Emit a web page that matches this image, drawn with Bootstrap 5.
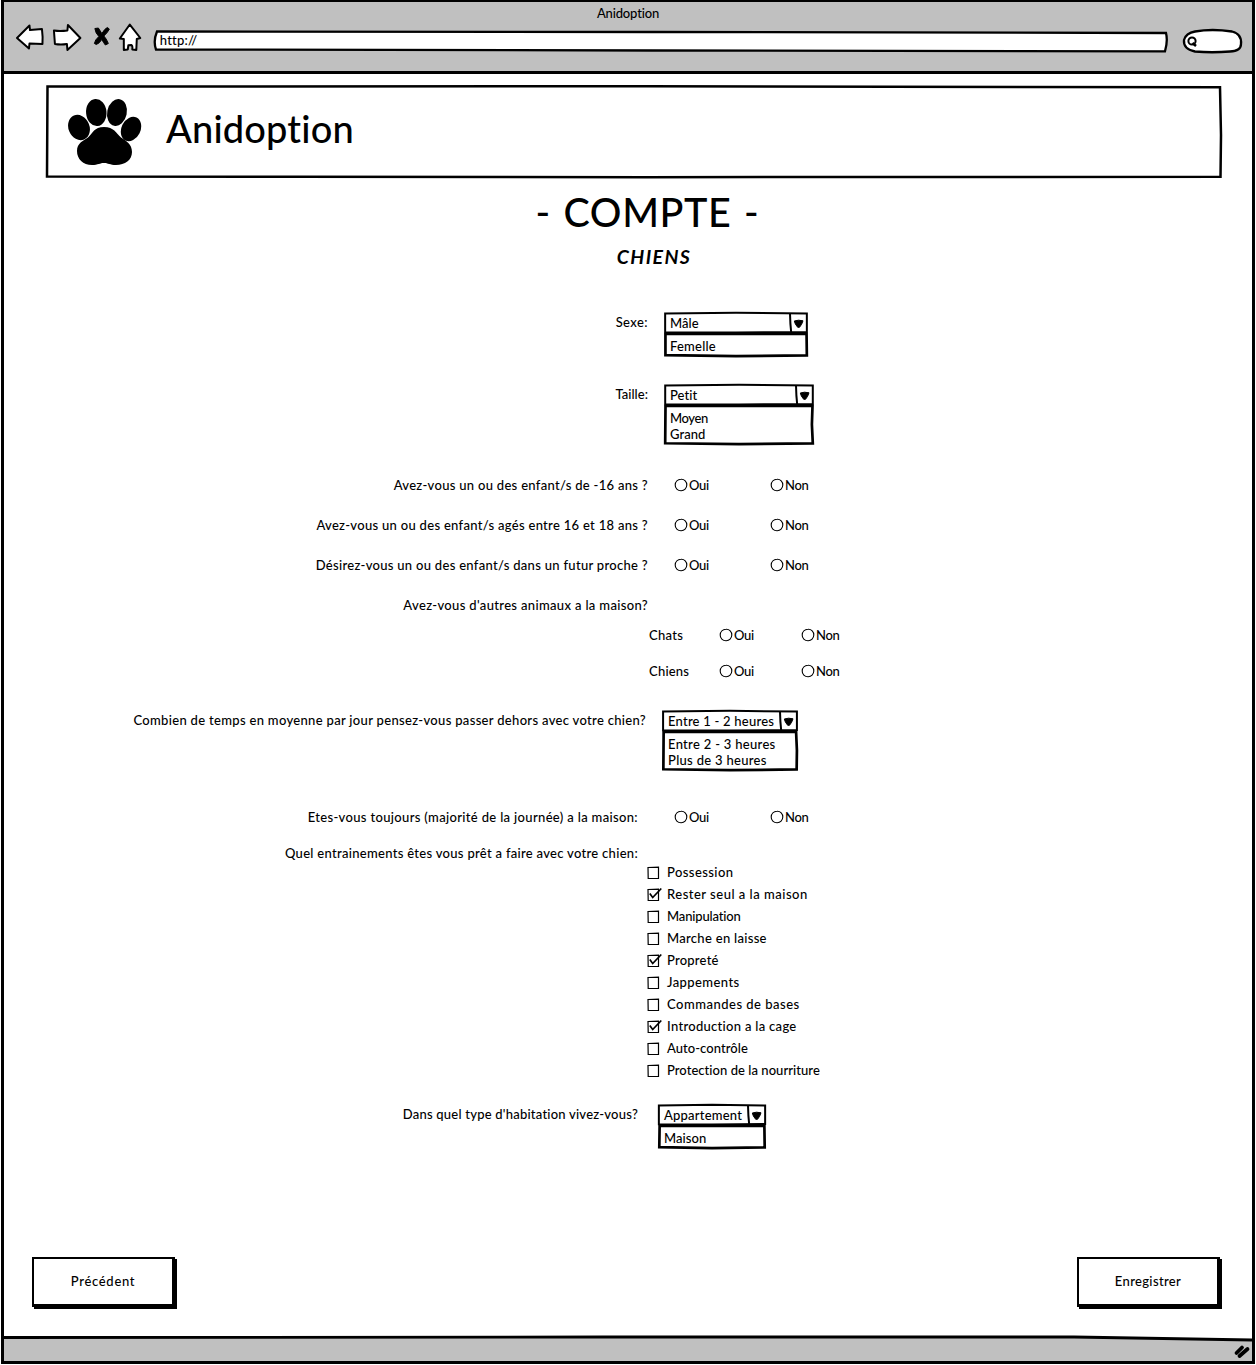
<!DOCTYPE html>
<html lang="fr">
<head>
<meta charset="utf-8">
<meta name="viewport" content="width=device-width, initial-scale=1">
<title>Anidoption</title>
<link href="https://cdn.jsdelivr.net/npm/bootstrap@5.3.0/dist/css/bootstrap.min.css" rel="stylesheet">
<style>
body{font-family:Lato,"Open Sans",sans-serif;font-size:13px;line-height:22px;color:#000;background:#fff;letter-spacing:.3px;font-weight:500}
.win{width:1254px;height:1364px;margin-left:1px;border:3px solid #000;border-top-width:2.5px}
.topbar{height:72px;background:#c0c0c0;border-bottom:3px solid #000;padding:0 9px 0 11px}
.topbar .ttl{height:21px;line-height:22px;letter-spacing:-.15px;margin-right:2px}
.tools{height:32px}
.url{width:1016px;height:22px;margin:3px 0 0 8px}
.back{position:absolute;left:0;top:0;width:100%;height:100%;z-index:0;overflow:visible}
.back path{vector-effect:non-scaling-stroke}
.url span{position:relative;padding-left:7px;line-height:20px;letter-spacing:.2px;display:block}
.pill{width:61px;height:26px;margin:3px 0 0 15px}
.banner{height:93px;margin:11px 30px 0 42px;padding:0 0 0 20px}
.banner h1{font-size:38px;line-height:44px;letter-spacing:.15px;margin:-8px 0 0 24px;font-weight:500;position:relative}
.paw{position:relative}
.page-h{font-size:39.5px;line-height:46px;letter-spacing:.6px;margin:11px 0 0 39px;font-weight:500;word-spacing:2px}
.sub-h{font-size:19.5px;line-height:24px;margin:10px 0 42px 52px;letter-spacing:1.4px;font-weight:700;font-style:italic}
.q{height:22px}
.q.one{height:46px}
.q.two{height:62px}
.g8{margin-top:8px}.g14{margin-top:14px}.g18{margin-top:18px}.g22{margin-top:22px}.g26{margin-top:26px}.g27{margin-top:27px}.g29{margin-top:29px}.g35{margin-top:35px}
.sub{margin-left:645px}
.sub .nm{width:70px}
.train{height:19px}
.lb{width:644px;text-align:right;flex:none;white-space:nowrap}
.lb.m{width:642px;letter-spacing:.32px}
.lb.s{width:634px}
.sel{flex:none;margin:1px 0 0 16px;white-space:nowrap}
.sel.last{margin-left:20px}
.w144{width:144px}.w150{width:150px}.w136{width:136px}.w108{width:108px}
.hd{height:22px;padding-left:6px;position:relative}
.hd span,.op span{position:relative}
.hd .ar{width:19px;height:22px;flex:none;position:relative}
.op{line-height:16px;padding:4px 0 3px 6px;position:relative}
.r{flex:none;white-space:nowrap;letter-spacing:-.3px}
.r.a{width:96px;margin-left:26px}
.r.b{width:96px;margin-left:36px}
.r.c{width:82px}
.r svg{display:block;width:14px;height:14px;margin-right:1px}
.ck{height:22px;margin-left:642px}
.ck svg{display:block;width:16px;height:16px;margin:1px 5px 0 0}
.k-4{letter-spacing:-.4px}.k-1{letter-spacing:-.15px}.k0{letter-spacing:.05px}.k2{letter-spacing:.22px}.k3{letter-spacing:.34px}.k4{letter-spacing:.42px}.k5{letter-spacing:.5px}
.acts{margin:108px 32px 0 28px}
.bt{width:143px;height:50px;border:2px solid #000;border-radius:0;background:#fff;box-shadow:2px 2px 0 #000;border-bottom-width:3px;border-right-width:3px;font-size:13px;letter-spacing:.35px;font-weight:500;color:#000;padding:0}
.bt.k7{letter-spacing:.7px}
.foot{height:26px}
.foot svg{display:block}
</style>
<script src="https://cdn.jsdelivr.net/npm/bootstrap@5.3.0/dist/js/bootstrap.bundle.min.js"></script>
</head>
<body>
<svg width="0" height="0" class="position-absolute">
<symbol id="rad" viewBox="0 0 14 14"><path d="M7 1.200C10.400 1 12.900 3.700 12.800 7S10.300 12.900 7 12.800S1.100 10.300 1.200 7S3.800 1.300 7 1.200Z" fill="#fff" stroke="#000" stroke-width="1.100"/></symbol>
<symbol id="box" viewBox="0 0 16 16"><path d="M2 2.500L12.500 2.200L12.500 13.400L2.200 13.500Z" fill="#fff" stroke="#000" stroke-width="1.200"/></symbol>
<symbol id="chk" viewBox="0 0 16 16"><path d="M2 2.500L12.500 2.200L12.500 13.400L2.200 13.500Z" fill="#fff" stroke="#000" stroke-width="1.200"/><path d="M3.800 6.500L6.700 10.500L15.300 1.500" fill="none" stroke="#000" stroke-width="1.700"/></symbol>
<symbol id="arr" viewBox="0 0 19 22"><path d="M1 1.500Q1.200 12 2.200 20.500" fill="none" stroke="#000" stroke-width="2"/><path d="M5.300 9Q9.500 7.500 14 8.800Q13 12.500 10.500 15.300L8.700 15.300Q5.800 12 5.300 9Z" fill="#000" stroke="#000" stroke-linejoin="round"/></symbol>
</svg>
<div class="win d-flex flex-column">
  <header class="topbar">
    <div class="ttl text-center">Anidoption</div>
    <div class="tools d-flex align-items-center">
      <svg width="130" height="32" viewBox="15 22.500 130 32" fill="#fff" stroke="#000" stroke-width="2" stroke-linejoin="round">
        <path d="M17 37.500L29.500 25L30 29.500L42 28.500Q43 36 42.500 43.500L29.500 43L29 48Z"/>
        <path d="M54 30Q60 31 67.500 30L68 24.500L80.500 37.500L67.500 49.500L67 43.500Q61 44.500 55 43.500Q54.500 37 54 30Z"/>
        <path d="M95 28L98.500 27.500L102 33Q105 28 107.500 27L109.500 28.500Q108 32 104 35.500Q106.500 38 108.500 43L105.500 44.500Q103.500 42 102 39Q99.500 43 96.500 44L94.500 43Q95 39.500 99 36Q95.500 32.500 95 28Z" fill="#000" stroke-width="1"/>
        <path d="M130 24L140.500 37.500L137 38.500L136.500 49.500L132.500 49Q133 45 131.500 44.500L128.500 44.800L128 49L124 49.500L124 38.500L120 38Z"/>
      </svg>
      <div class="url position-relative"><svg class="back"><path d="M4 1.500L500 2L1013 3Q1015 11 1012 21.300L500 20.500L3 19.500Q0 11 4 1.500Z" fill="#fff" stroke="#000" stroke-width="2.300"/></svg><span>http://</span></div>
      <div class="pill position-relative"><svg class="back"><path d="M13 3.500Q30 .500 50 3.500Q60 6 59 16Q59 23 48 23.500Q30 25 13 23.500Q1 21 2 12Q4 5 13 3.500Z" fill="#fff" stroke="#000" stroke-width="2.300"/><circle cx="10" cy="13" r="3.600" fill="none" stroke="#000" stroke-width="2"/><path d="M10.500 15L14 18" stroke="#000" stroke-width="2.500"/></svg></div>
    </div>
  </header>
  <main>
    <div class="banner d-flex align-items-center position-relative">
      <svg class="back" viewBox="0 0 1176 93" preserveAspectRatio="none"><path d="M1.500 1.500L600 1.200L1174 2.300L1175 50L1174.500 91.800L600 92.200L250 91.800L1 91.500Z" fill="#fff" stroke="#000" stroke-width="2.500"/></svg>
      <svg class="paw" width="76" height="70" viewBox="66 97 76 70"><ellipse cx="79" cy="127.500" rx="10.500" ry="13" transform="rotate(-23 79 127.500)"/><ellipse cx="96.300" cy="112.500" rx="10.200" ry="13.500" transform="rotate(-5 96.300 112.500)"/><ellipse cx="117" cy="112.500" rx="9.800" ry="13.500" transform="rotate(12 117 112.500)"/><ellipse cx="131" cy="129" rx="9.500" ry="12.700" transform="rotate(26 131 129)"/><path d="M104 127C114 127 116 133 121 137.500C126 141 132 144 132 152C132 160 125 165 116 165C110 165 108 163 104 163C100 163 98 165 92 165C83 165 77 159 77 151C77 143 83 141 88 137.500C93 133 94 127 104 127Z"/></svg>
      <h1>Anidoption</h1>
    </div>
    <h2 class="page-h text-center">- COMPTE -</h2>
    <h3 class="sub-h text-center">CHIENS</h3>

    <div class="q one d-flex"><div class="lb k4">Sexe:</div><div class="sel w144"><div class="hd d-flex justify-content-between"><svg class="back" viewBox="0 0 100 22" preserveAspectRatio="none"><path d="M.800 1.500L50 .800L99.200 1.500L99.200 20L50 20.500L.800 20.300Z" fill="#fff" stroke="#000" stroke-width="2"/></svg><span class="k0">Mâle</span><svg class="ar"><use href="#arr"/></svg></div><div class="op"><svg class="back" viewBox="0 0 100 22" preserveAspectRatio="none"><path d="M1 0L99 0L99.200 20.500L50 21.200L1 20.300Z" fill="#fff" stroke="#000" stroke-width="2.700"/></svg><span class="k2">Femelle</span></div></div></div>
    <div class="q two g26 d-flex"><div class="lb k0">Taille:</div><div class="sel w150"><div class="hd d-flex justify-content-between"><svg class="back" viewBox="0 0 100 22" preserveAspectRatio="none"><path d="M.800 1.500L50 .800L99.200 1.500L99.200 20L50 20.500L.800 20.300Z" fill="#fff" stroke="#000" stroke-width="2"/></svg><span class="k0">Petit</span><svg class="ar"><use href="#arr"/></svg></div><div class="op"><svg class="back" viewBox="0 0 100 38" preserveAspectRatio="none"><path d="M1 0L99 0L98.600 18L99.200 36.500L50 37.200L.800 36.300Z" fill="#fff" stroke="#000" stroke-width="2.700"/></svg><span class="k-4">Moyen</span><br><span class="k0">Grand</span></div></div></div>

    <div class="q g29 d-flex"><div class="lb">Avez-vous un ou des enfant/s de -16 ans ?</div><div class="r a d-flex align-items-center"><svg><use href="#rad"/></svg>Oui</div><div class="r d-flex align-items-center"><svg><use href="#rad"/></svg>Non</div></div>
    <div class="q g18 d-flex"><div class="lb">Avez-vous un ou des enfant/s agés entre 16 et 18 ans ?</div><div class="r a d-flex align-items-center"><svg><use href="#rad"/></svg>Oui</div><div class="r d-flex align-items-center"><svg><use href="#rad"/></svg>Non</div></div>
    <div class="q g18 d-flex"><div class="lb">Désirez-vous un ou des enfant/s dans un futur proche ?</div><div class="r a d-flex align-items-center"><svg><use href="#rad"/></svg>Oui</div><div class="r d-flex align-items-center"><svg><use href="#rad"/></svg>Non</div></div>
    <div class="q g18 d-flex"><div class="lb k3">Avez-vous d'autres animaux a la maison?</div></div>
    <div class="q sub g8 d-flex"><div class="nm">Chats</div><div class="r c d-flex align-items-center"><svg><use href="#rad"/></svg>Oui</div><div class="r d-flex align-items-center"><svg><use href="#rad"/></svg>Non</div></div>
    <div class="q sub g14 d-flex"><div class="nm k2">Chiens</div><div class="r c d-flex align-items-center"><svg><use href="#rad"/></svg>Oui</div><div class="r d-flex align-items-center"><svg><use href="#rad"/></svg>Non</div></div>

    <div class="q two g27 d-flex"><div class="lb m">Combien de temps en moyenne par jour pensez-vous passer dehors avec votre chien?</div><div class="sel w136"><div class="hd d-flex justify-content-between"><svg class="back" viewBox="0 0 100 22" preserveAspectRatio="none"><path d="M.800 1.500L50 .800L99.200 1.500L99.200 20L50 20.500L.800 20.300Z" fill="#fff" stroke="#000" stroke-width="2"/></svg><span class="k2">Entre 1 - 2 heures</span><svg class="ar"><use href="#arr"/></svg></div><div class="op"><svg class="back" viewBox="0 0 100 38" preserveAspectRatio="none"><path d="M1.200 0L98.600 0L99.200 18L99 36.500L50 37.200L1 36.300Z" fill="#fff" stroke="#000" stroke-width="2.700"/></svg><span>Entre 2 - 3 heures<br>Plus de 3 heures</span></div></div></div>

    <div class="q g35 d-flex"><div class="lb s k3">Etes-vous toujours (majorité de la journée) a la maison:</div><div class="r b d-flex align-items-center"><svg><use href="#rad"/></svg>Oui</div><div class="r d-flex align-items-center"><svg><use href="#rad"/></svg>Non</div></div>
    <div class="q train g14 d-flex"><div class="lb s">Quel entrainements êtes vous prêt a faire avec votre chien:</div></div>
    <div class="ck d-flex align-items-center k4"><svg><use href="#box"/></svg>Possession</div>
    <div class="ck d-flex align-items-center k5"><svg><use href="#chk"/></svg>Rester seul a la maison</div>
    <div class="ck d-flex align-items-center k-1"><svg><use href="#box"/></svg>Manipulation</div>
    <div class="ck d-flex align-items-center"><svg><use href="#box"/></svg>Marche en laisse</div>
    <div class="ck d-flex align-items-center k2"><svg><use href="#chk"/></svg>Propreté</div>
    <div class="ck d-flex align-items-center k4"><svg><use href="#box"/></svg>Jappements</div>
    <div class="ck d-flex align-items-center k5"><svg><use href="#box"/></svg>Commandes de bases</div>
    <div class="ck d-flex align-items-center"><svg><use href="#chk"/></svg>Introduction a la cage</div>
    <div class="ck d-flex align-items-center k0"><svg><use href="#box"/></svg>Auto-contrôle</div>
    <div class="ck d-flex align-items-center k0"><svg><use href="#box"/></svg>Protection de la nourriture</div>

    <div class="q one g22 d-flex"><div class="lb s k2">Dans quel type d'habitation vivez-vous?</div><div class="sel last w108"><div class="hd d-flex justify-content-between"><svg class="back" viewBox="0 0 100 22" preserveAspectRatio="none"><path d="M.800 1.500L50 .800L99.200 1.500L99.200 20L50 20.500L.800 20.300Z" fill="#fff" stroke="#000" stroke-width="2"/></svg><span class="k2">Appartement</span><svg class="ar"><use href="#arr"/></svg></div><div class="op"><svg class="back" viewBox="0 0 100 22" preserveAspectRatio="none"><path d="M1.500 0L98.500 0L98.800 20.500L50 21.200L1.200 20.300Z" fill="#fff" stroke="#000" stroke-width="2.700"/></svg><span class="k0">Maison</span></div></div></div>
    <div class="acts d-flex justify-content-between"><button class="btn bt k7" type="button">Précédent</button><button class="btn bt" type="button">Enregistrer</button></div>
  </main>
  <footer class="foot mt-auto"><svg width="1248" height="26" viewBox="0 0 1248 26"><path d="M0 2.500L1100 2L1248 4.500V26H0Z" fill="#c0c0c0"/><path d="M0 2.500L600 2L1070 2L1248 5" fill="none" stroke="#000" stroke-width="2.800"/><path d="M1232.500 18L1238 12.500M1235.500 21L1243.500 14" stroke="#000" stroke-width="3.800" stroke-linecap="round"/></svg></footer>
</div>
</body>
</html>
